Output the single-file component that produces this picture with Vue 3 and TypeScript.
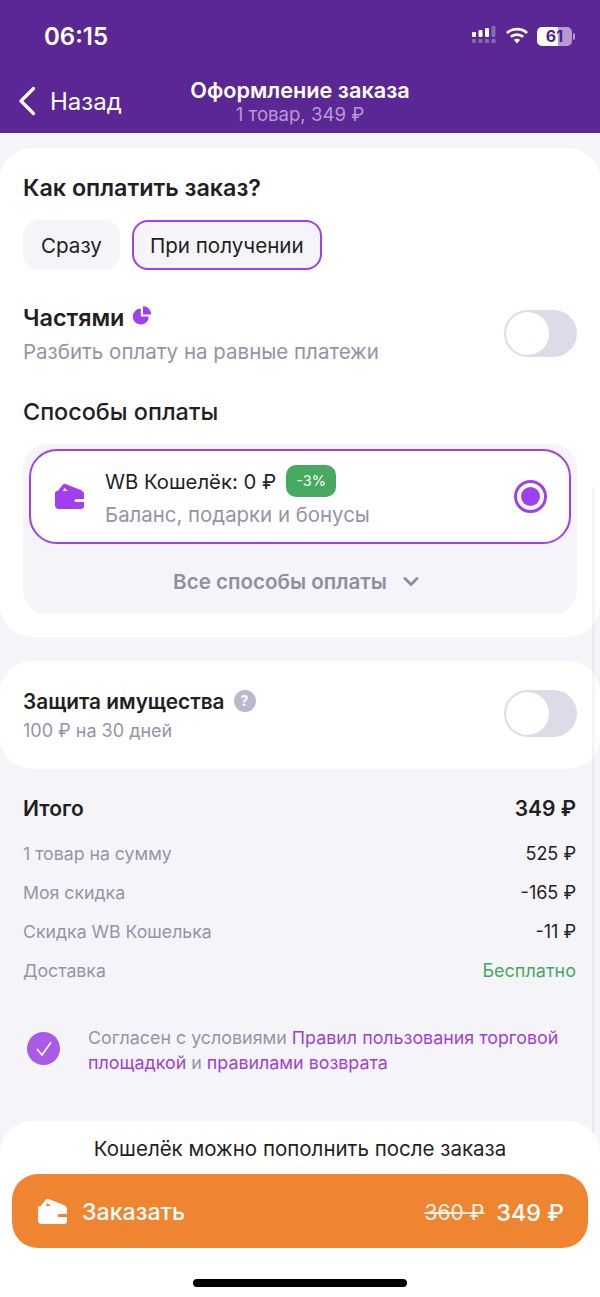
<template>
  <div class="page">
    <header class="top">
      <div class="status">
        <span class="time">06:15</span>
        <div class="status-icons">
          <svg width="25" height="20" viewBox="0 0 25 20">
            <g fill="#fff">
              <rect x="0" y="6" width="4" height="5" rx="1" />
              <rect x="6.5" y="4" width="4" height="7" rx="1" />
              <rect x="13" y="2" width="4" height="9" rx="1" />
            </g>
            <rect x="19.5" y="0" width="4" height="11" rx="1" fill="#fff" opacity="0.3" />
            <g fill="#fff" opacity="0.3">
              <rect x="0" y="13" width="4" height="4" rx="1" />
              <rect x="6.5" y="13" width="4" height="4" rx="1" />
              <rect x="13" y="13" width="4" height="4" rx="1" />
              <rect x="19.5" y="13" width="4" height="4" rx="1" />
            </g>
          </svg>
          <svg class="wifi" width="24" height="17" viewBox="0 0 22 16" fill="none" stroke="#fff" stroke-width="2.6">
            <path d="M1.5 5.6C6.8 .9 15.2 .9 20.5 5.6" />
            <path d="M5.2 9.2C8.5 6.4 13.5 6.4 16.8 9.2" />
            <path d="M11 15.5l-3-3.4c1.8-1.3 4.2-1.3 6 0z" fill="#fff" stroke="none" />
          </svg>
          <div class="battery">
            <div class="battery-body"><span>61</span></div>
            <i></i>
          </div>
        </div>
      </div>
      <div class="nav">
        <div class="back">
          <svg width="18" height="30" viewBox="0 0 18 30" fill="none" stroke="#fff" stroke-width="3.2" stroke-linecap="round" stroke-linejoin="round">
            <path d="M15.5 2.5L3 15l12.5 12.5" />
          </svg>
          <span>Назад</span>
        </div>
        <div class="nav-title">
          <div class="nav-main">Оформление заказа</div>
          <div class="nav-sub">1 товар, 349 ₽</div>
        </div>
      </div>
    </header>

    <main class="content">
      <section class="card card-pay">
        <h2 class="pay-title">Как оплатить заказ?</h2>
        <div class="chips">
          <button class="chip">Сразу</button>
          <button class="chip chip-active">При получении</button>
        </div>

        <div class="option parts">
          <div>
            <div class="option-title">
              Частями
              <svg class="pie" width="20" height="19" viewBox="0 0 20 19">
                <path d="M8.8 2.6A8 8 0 1 0 16.8 10.6H8.8Z" fill="#a03ff0" />
                <path d="M11 .3A8 8 0 0 1 19.3 8.6H11Z" fill="#a03ff0" />
              </svg>
            </div>
            <div class="option-sub option-sub-big">Разбить оплату на равные платежи</div>
          </div>
          <div class="toggle"><span></span></div>
        </div>

        <h3 class="methods-title">Способы оплаты</h3>
        <div class="methods">
          <div class="method">
            <svg class="wallet" width="30" height="27" viewBox="0 0 30 27">
              <path d="M1 10L8 1.5Q9 .5 10.5 1L27 7.5V10H15L9.5 5L6.5 10Z" fill="#a03ff0" />
              <path d="M2 8H26a3 3 0 0 1 3 3v5h-8a1.5 1.5 0 0 0 0 3h8v4a3 3 0 0 1-3 3H4a4 4 0 0 1-4-4V10a2 2 0 0 1 2-2Z" fill="#a03ff0" />
            </svg>
            <div class="method-text">
              <div class="method-name"><span class="method-label">WB Кошелёк: 0 ₽</span> <span class="badge">-3%</span></div>
              <div class="method-sub">Баланс, подарки и бонусы</div>
            </div>
            <div class="radio"><span></span></div>
          </div>
          <div class="all-methods">
            Все способы оплаты
            <svg width="16" height="11" viewBox="0 0 16 11" fill="none" stroke="#8f8fa3" stroke-width="3" stroke-linecap="round" stroke-linejoin="round">
              <path d="M2 2.5l6 6 6-6" />
            </svg>
          </div>
        </div>
      </section>

      <section class="card card-protect">
        <div class="option">
          <div>
            <div class="option-title option-title-small">
              Защита имущества
              <span class="help">?</span>
            </div>
            <div class="option-sub">100 ₽ на 30 дней</div>
          </div>
          <div class="toggle"><span></span></div>
        </div>
      </section>

      <section class="summary">
        <div class="total">
          <span>Итого</span>
          <span>349 ₽</span>
        </div>
        <div v-for="row in rows" :key="row.label" class="row">
          <span class="row-label">{{ row.label }}</span>
          <span :class="{ free: row.free }">{{ row.value }}</span>
        </div>
      </section>

      <div class="agree">
        <div class="agree-check">
          <svg width="20" height="20" viewBox="0 0 20 20" fill="none" stroke="#fff" stroke-width="1.7" stroke-linecap="round" stroke-linejoin="round">
            <path d="M3.5 10.5l4.5 5.5L16.5 4" />
          </svg>
        </div>
        <p>
          Согласен с условиями <a>Правил пользования торговой</a><br />
          <a>площадкой</a> и <a>правилами возврата</a>
        </p>
      </div>
    </main>

    <footer class="bottom">
      <div class="hint">Кошелёк можно пополнить после заказа</div>
      <button class="order">
        <svg width="30" height="27" viewBox="0 0 30 27">
          <path d="M1 10L8 1.5Q9 .5 10.5 1L27 7.5V10H15L9.5 5L6.5 10Z" fill="#fff" />
          <path d="M2 8H26a3 3 0 0 1 3 3v5h-8a1.5 1.5 0 0 0 0 3h8v4a3 3 0 0 1-3 3H4a4 4 0 0 1-4-4V10a2 2 0 0 1 2-2Z" fill="#fff" />
        </svg>
        <span class="order-label">Заказать</span>
        <s class="old-price">360 ₽</s>
        <span class="price">349 ₽</span>
      </button>
      <div class="home-bar"></div>
    </footer>

    <div class="scrollbar"></div>
  </div>
</template>

<script setup lang="ts">
interface SummaryRow {
  label: string;
  value: string;
  free?: boolean;
}

const rows: SummaryRow[] = [
  { label: '1 товар на сумму', value: '525 ₽' },
  { label: 'Моя скидка', value: '-165 ₽' },
  { label: 'Скидка WB Кошелька', value: '-11 ₽' },
  { label: 'Доставка', value: 'Бесплатно', free: true },
];
</script>

<style>
html,
body {
  margin: 0;
  background: #f5f5f9;
}
</style>

<style scoped>
.page {
  position: relative;
  display: flex;
  flex-direction: column;
  width: 600px;
  height: 1297px;
  overflow: hidden;
  background: #f5f5f9;
  color: #1f1f24;
  font-family: Inter, 'Liberation Sans', sans-serif;
}

.top {
  height: 133px;
  flex-shrink: 0;
  background: #5b2795;
  color: #fff;
}

.status {
  display: flex;
  align-items: center;
  justify-content: space-between;
  padding: 22px 25px 0 44px;
  height: 28px;
}

.time {
  font-size: 24px;
  font-weight: 600;
}

.status-icons {
  display: flex;
  align-items: center;
  gap: 8px;
}

.wifi {
  margin-top: -1px;
}

.battery {
  display: flex;
  align-items: center;
  gap: 1px;
}

.battery-body {
  width: 35px;
  height: 19px;
  border-radius: 5px;
  background: linear-gradient(90deg, #fff 0 60%, #b79ad3 60%);
  color: #4b2385;
  font-size: 16px;
  font-weight: 700;
  line-height: 19px;
  text-align: center;
}

.battery i {
  width: 2px;
  height: 7px;
  border-radius: 0 2px 2px 0;
  background: #b79ad3;
}

.nav {
  position: relative;
  display: flex;
  justify-content: center;
  margin-top: 25px;
}

.back {
  position: absolute;
  left: 18px;
  top: 11px;
  display: flex;
  align-items: center;
  gap: 14px;
  font-size: 24px;
}

.nav-title {
  margin-top: 2px;
  text-align: center;
}

.nav-main {
  font-size: 21.7px;
  font-weight: 600;
  line-height: 26px;
}

.nav-sub {
  font-size: 18.6px;
  line-height: 23px;
  color: #b79ad3;
}

.content {
  flex: 1;
  padding-top: 15px;
}

.card {
  background: #fff;
  border-radius: 32px;
}

.card-pay {
  height: 489px;
  box-sizing: border-box;
  padding: 25px 23px 0;
}

.pay-title {
  margin: 0;
  font-size: 23.3px;
  font-weight: 600;
  line-height: 30px;
}

.chips {
  display: flex;
  gap: 12px;
  margin-top: 17px;
}

.chip {
  height: 50px;
  padding: 0 16px;
  border: 2px solid transparent;
  border-radius: 16px;
  background: #f5f5f9;
  color: #1f1f24;
  font-family: inherit;
  font-size: 20.6px;
}

.chip-active {
  border-color: #a03ff0;
}

.option {
  display: flex;
  align-items: flex-start;
  justify-content: space-between;
}

.parts {
  margin-top: 33px;
}

.parts .toggle {
  margin-top: 7px;
}

.option-title {
  display: flex;
  align-items: center;
  gap: 8px;
  font-size: 23.4px;
  font-weight: 600;
  line-height: 30px;
}

.pie {
  margin-top: -5px;
}

.option-title-small {
  font-size: 20.8px;
  gap: 9px;
}

.option-sub {
  margin-top: 2px;
  color: #9494a6;
  font-size: 18px;
  line-height: 24px;
}

.option-sub-big {
  margin-top: 5px;
  font-size: 20.5px;
  line-height: 28px;
}

.toggle {
  width: 73px;
  height: 47px;
  border-radius: 24px;
  background: #dcdce8;
}

.toggle span {
  display: block;
  width: 43px;
  height: 43px;
  margin: 2px;
  border-radius: 50%;
  background: #fff;
}

.methods-title {
  margin: 31px 0 0;
  font-size: 23.4px;
  font-weight: 500;
  line-height: 30px;
}

.methods {
  margin-top: 17px;
  padding: 5px 6px 0;
  border-radius: 24px;
  background: #f5f5f9;
}

.method {
  display: flex;
  align-items: center;
  height: 95px;
  box-sizing: border-box;
  padding: 0 22px 0 24px;
  border: 2px solid #a03ff0;
  border-radius: 28px;
  background: #fff;
}

.wallet {
  flex-shrink: 0;
}

.method-text {
  flex: 1;
  margin-left: 20px;
}

.method-name {
  display: flex;
  align-items: center;
  gap: 10px;
  font-size: 20.3px;
  line-height: 32px;
}

.method-label {
  padding-top: 3px;
}

.badge {
  width: 50px;
  height: 32px;
  border-radius: 10px;
  background: #47a95f;
  color: #fff;
  font-size: 14.5px;
  line-height: 32px;
  text-align: center;
}

.method-sub {
  margin-top: 2px;
  color: #9494a6;
  font-size: 20.4px;
  line-height: 30px;
}

.radio {
  display: flex;
  align-items: center;
  justify-content: center;
  width: 33px;
  height: 33px;
  box-sizing: border-box;
  border: 3px solid #a03ff0;
  border-radius: 50%;
}

.radio span {
  width: 19px;
  height: 19px;
  border-radius: 50%;
  background: #a03ff0;
}

.all-methods {
  display: flex;
  align-items: center;
  justify-content: center;
  gap: 16px;
  height: 66px;
  padding: 4px 8px 0 0;
  color: #8f8fa3;
  font-size: 20.6px;
  font-weight: 600;
}

.card-protect {
  margin-top: 24px;
  height: 108px;
  box-sizing: border-box;
  padding: 26px 23px 0;
}

.card-protect .toggle {
  margin-top: 3px;
}

.help {
  width: 22px;
  height: 22px;
  margin-top: -3px;
  border-radius: 50%;
  background: #b9b9cc;
  color: #fff;
  font-size: 14px;
  font-weight: 700;
  line-height: 22px;
  text-align: center;
}

.summary {
  padding: 25px 24px 0 23px;
}

.total {
  display: flex;
  justify-content: space-between;
  margin-bottom: 18px;
  font-size: 21px;
  font-weight: 600;
  line-height: 30px;
}

.row {
  display: flex;
  justify-content: space-between;
  margin-top: 15px;
  font-size: 18px;
  line-height: 24px;
}

.row-label {
  color: #9494a6;
  font-size: 17.7px;
}

.free {
  color: #47a95f;
}

.agree {
  display: flex;
  align-items: center;
  gap: 28px;
  padding: 42px 24px 0 27px;
}

.agree-check {
  display: flex;
  align-items: center;
  justify-content: center;
  flex-shrink: 0;
  width: 33px;
  height: 33px;
  margin-bottom: 3px;
  border-radius: 50%;
  background: #a85be6;
}

.agree p {
  margin: 0;
  color: #9494a6;
  font-size: 17.85px;
  line-height: 25px;
}

.agree a {
  color: #a03fdc;
}

.bottom {
  flex-shrink: 0;
  height: 176px;
  border-radius: 32px 32px 0 0;
  background: #fff;
}

.hint {
  padding-top: 14px;
  font-size: 20.5px;
  line-height: 28px;
  text-align: center;
}

.order {
  display: flex;
  align-items: center;
  width: 576px;
  height: 74px;
  margin: 11px 12px 0;
  padding: 0 24px 0 26px;
  border: 0;
  border-radius: 26px;
  background: #ef8431;
  color: #fff;
  font-family: inherit;
}

.order-label {
  flex: 1;
  margin-left: 14px;
  padding-top: 2px;
  font-size: 23.2px;
  font-weight: 500;
  text-align: left;
}

.old-price {
  padding-top: 2px;
  font-size: 21px;
  opacity: 0.9;
}

.price {
  margin-left: 12px;
  padding-top: 2px;
  font-size: 23.4px;
  font-weight: 500;
}

.home-bar {
  width: 214px;
  height: 8px;
  margin: 31px auto 0;
  border-radius: 4px;
  background: #000;
}

.scrollbar {
  position: absolute;
  top: 487px;
  right: 5px;
  width: 3px;
  height: 646px;
  border-radius: 2px;
  background: rgba(0, 0, 0, 0.04);
}
</style>
